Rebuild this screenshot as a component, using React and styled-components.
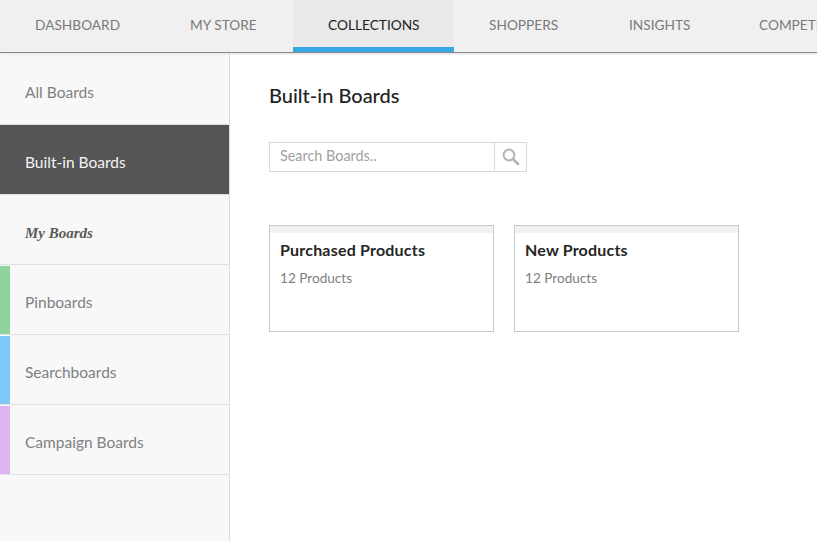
import React from "react";
import styled, { createGlobalStyle } from "styled-components";

const Global = createGlobalStyle`
  html, body { margin: 0; padding: 0; height: 100%; overflow: hidden; background: #fff; }
  #root { height: 100%; }
  * { box-sizing: border-box; }
  body { font-family: "Lato", "Liberation Sans", sans-serif; }
`;

const Page = styled.div`
  display: flex;
  flex-direction: column;
  width: 817px;
  height: 541px;
  overflow: hidden;
`;

const TopNav = styled.nav`
  display: flex;
  flex: none;
  height: 53px;
  background: #f0f0f0;
  border-bottom: 1px solid #8a8a8a;
  box-shadow: 0 1px 2px rgba(0, 0, 0, 0.14);
  overflow: hidden;
  position: relative;
  z-index: 1;
`;

const Tab = styled.a`
  flex: none;
  display: flex;
  align-items: center;
  width: ${(p) => p.$w}px;
  height: 52px;
  padding: 1px 0 0 35px;
  font-size: 13.7px;
  white-space: nowrap;
  color: ${(p) => (p.$active ? "#222" : "#7a7a7a")};
  background: ${(p) => (p.$active ? "#e9e9e9" : "transparent")};
  border-bottom: 5px solid ${(p) => (p.$active ? "#35a8e8" : "transparent")};
`;

const Body = styled.div`
  flex: 1;
  display: flex;
  min-height: 0;
`;

const Sidebar = styled.aside`
  flex: none;
  width: 230px;
  background: #f8f8f8;
  border-right: 1px solid #dcdcdc;
  border-top: 2px solid #fff;
`;

const SideRow = styled.div`
  position: relative;
  display: flex;
  align-items: center;
  height: 70px;
  padding-left: 25px;
  padding-top: 5px;
  font-size: 15.5px;
  color: ${(p) => (p.$active ? "#f4f4f4" : "#808080")};
  background: ${(p) => (p.$active ? "#555" : "transparent")};
  border-bottom: 1px solid #dfdfdf;
`;

const SideHeading = styled(SideRow)`
  padding-top: 8px;
  font-family: "Liberation Serif", serif;
  font-style: italic;
  font-weight: bold;
  font-size: 15px;
  color: #595959;
`;

const ColorMark = styled.span`
  position: absolute;
  left: 0;
  top: 1px;
  bottom: 0;
  width: 10px;
  background: ${(p) => p.$color};
`;

const Main = styled.main`
  flex: 1;
  padding: 31px 39px;
  background: #fff;
`;

const Title = styled.h1`
  margin: 0 0 34px;
  height: 24px;
  line-height: 22px;
  font-size: 20px;
  font-weight: 500;
  color: #222;
`;

const SearchBox = styled.div`
  display: flex;
  width: 258px;
  height: 30px;
  border: 1px solid #d8d8d8;
`;

const SearchInput = styled.div`
  flex: 1;
  padding-left: 10px;
  line-height: 25px;
  font-size: 14.4px;
  color: #a0a0a0;
`;

const SearchButton = styled.div`
  flex: none;
  width: 32px;
  display: flex;
  align-items: center;
  justify-content: center;
  border-left: 1px solid #d8d8d8;
`;

const Cards = styled.div`
  display: flex;
  gap: 20px;
  margin-top: 53px;
`;

const Card = styled.div`
  width: 225px;
  height: 107px;
  border: 1px solid #c9c9c9;
  &::before {
    content: "";
    display: block;
    height: 7px;
    background: #f2f2f2;
  }
`;

const CardBody = styled.div`
  padding: 7px 10px;
`;

const CardTitle = styled.div`
  font-size: 16px;
  letter-spacing: 0.2px;
  line-height: 19px;
  font-weight: 700;
  color: #262626;
`;

const CardMeta = styled.div`
  margin-top: 10px;
  font-size: 13.6px;
  line-height: 18px;
  color: #808080;
`;

const tabs = [
  ["DASHBOARD", 155],
  ["MY STORE", 138],
  ["COLLECTIONS", 161, true],
  ["SHOPPERS", 140],
  ["INSIGHTS", 130],
  ["COMPETITORS", 160],
];

export default function App() {
  return (
    <Page>
      <Global />
      <TopNav>
        {tabs.map(([label, w, active]) => (
          <Tab key={label} $w={w} $active={active}>
            {label}
          </Tab>
        ))}
      </TopNav>
      <Body>
        <Sidebar>
          <SideRow>All Boards</SideRow>
          <SideRow $active>Built-in Boards</SideRow>
          <SideHeading>My Boards</SideHeading>
          <SideRow>
            <ColorMark $color="#8cd49b" />
            Pinboards
          </SideRow>
          <SideRow>
            <ColorMark $color="#80c8fa" />
            Searchboards
          </SideRow>
          <SideRow>
            <ColorMark $color="#dcb4f2" />
            Campaign Boards
          </SideRow>
        </Sidebar>
        <Main>
          <Title>Built-in Boards</Title>
          <SearchBox>
            <SearchInput>Search Boards..</SearchInput>
            <SearchButton>
              <svg width="18" height="18" viewBox="0 0 18 18" fill="none" stroke="#b4b4b4">
                <circle cx="7" cy="7" r="5.4" strokeWidth="2" />
                <path d="M11 11l5 5" strokeWidth="2.8" strokeLinecap="round" />
              </svg>
            </SearchButton>
          </SearchBox>
          <Cards>
            <Card>
              <CardBody>
                <CardTitle>Purchased Products</CardTitle>
                <CardMeta>12 Products</CardMeta>
              </CardBody>
            </Card>
            <Card>
              <CardBody>
                <CardTitle>New Products</CardTitle>
                <CardMeta>12 Products</CardMeta>
              </CardBody>
            </Card>
          </Cards>
        </Main>
      </Body>
    </Page>
  );
}
